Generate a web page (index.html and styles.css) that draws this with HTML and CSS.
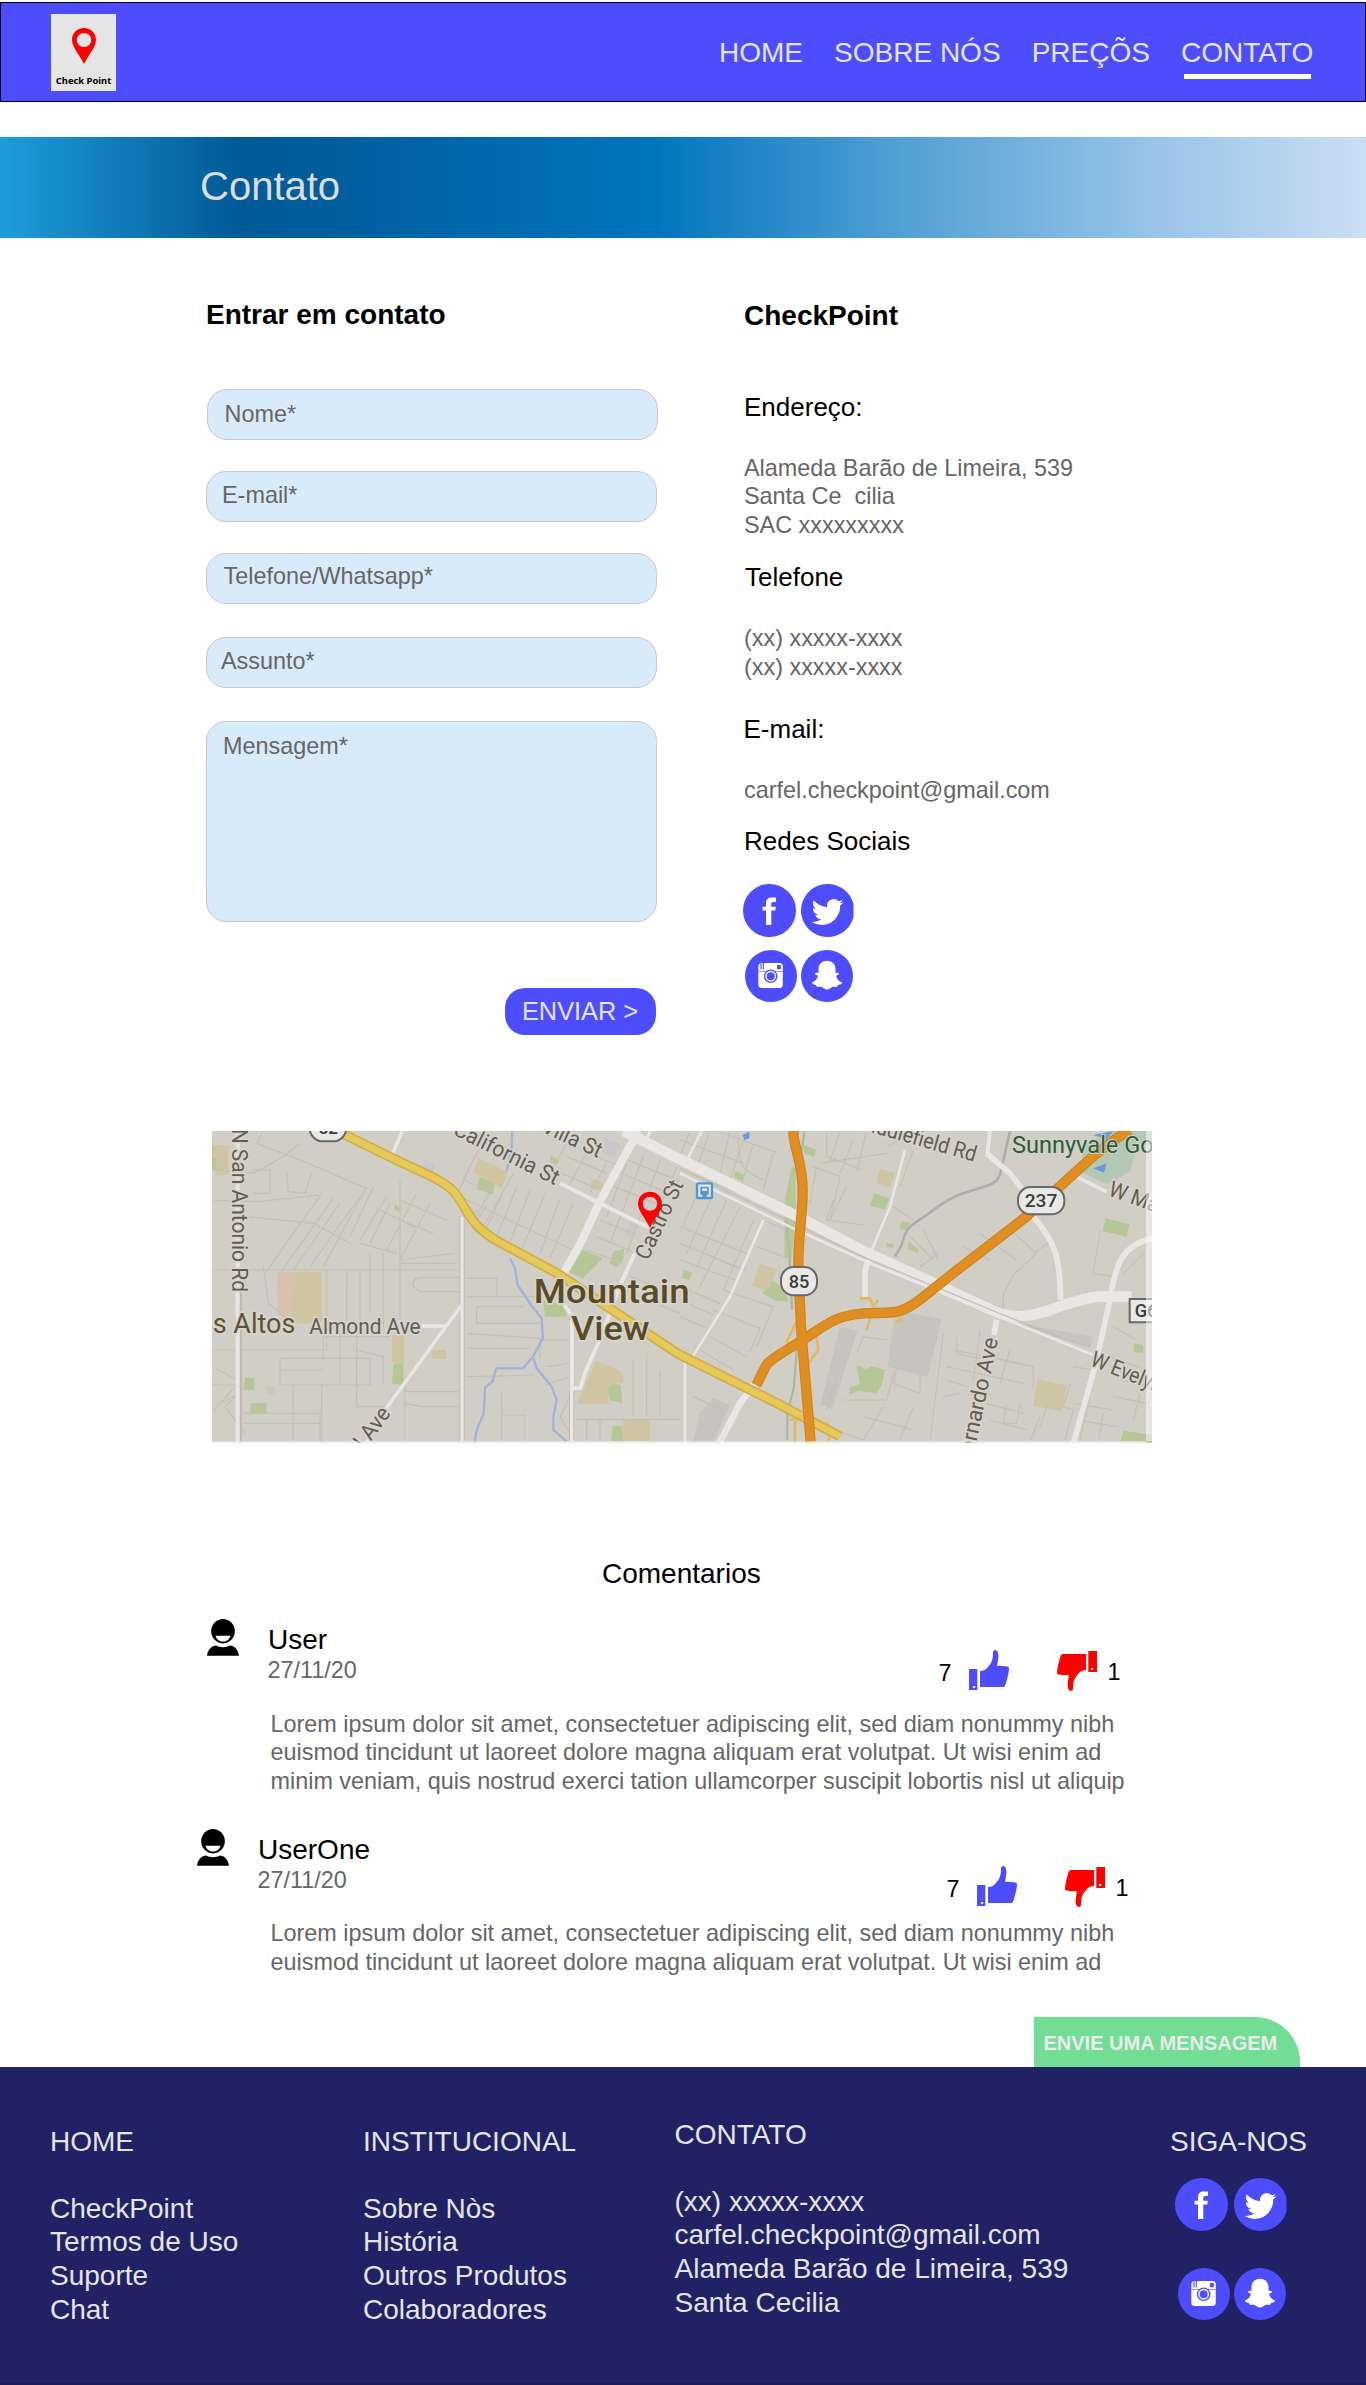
FILE: index.html
```html
<!DOCTYPE html>
<html lang="pt-BR">
<head>
<meta charset="utf-8">
<title>CheckPoint - Contato</title>
<link rel="stylesheet" href="styles.css">
</head>
<body>
<svg class="sprite" aria-hidden="true">
  <symbol id="pin" viewBox="0 0 24 36" preserveAspectRatio="none">
    <path fill="#f00" fill-rule="evenodd" d="M12 0C5 0 0 5 0 12c0 7 7 14 12 24 5-10 12-17 12-24C24 5 19 0 12 0zm0 5c4 0 7.200 3 7.200 7s-3.200 7-7.200 7-7.200-3-7.200-7 3.200-7 7.200-7z"/>
  </symbol>
  <symbol id="facebook" viewBox="0 0 53 53">
    <circle cx="26.500" cy="26.500" r="26.500" fill="#4d4dff"/>
    <path fill="#fff" d="M23 41V26.500h-3.500v-3.800H23v-3.400c0-4 2-5.800 5.500-5.800H33v4.600h-2.500c-1.700 0-2.200.7-2.200 2v2.600h4.500l-.5 3.800h-4V41z"/>
  </symbol>
  <symbol id="twitter" viewBox="0 0 53 53">
    <path fill="#4d4dff" d="M52.500 20v13C49.500 45 39 53 26.500 53 12 53 0 41 0 26.500S12 0 26.500 0C39 0 49.500 8 52.500 20z"/>
    <path fill="#fff" transform="translate(10.700 12.200) scale(1.320)" d="M23.950 4.570a10 10 0 0 1-2.820.77 4.960 4.960 0 0 0 2.160-2.720c-.95.55-2 .95-3.130 1.180a4.920 4.920 0 0 0-8.380 4.480C7.690 8.090 4.070 6.130 1.640 3.160a4.920 4.920 0 0 0 1.520 6.570 4.900 4.900 0 0 1-2.230-.61v.06a4.920 4.920 0 0 0 3.950 4.830 5 5 0 0 1-2.210.08 4.940 4.940 0 0 0 4.600 3.420A9.870 9.870 0 0 1 0 19.540a14 14 0 0 0 7.550 2.210c9.050 0 14-7.500 14-13.980 0-.21 0-.42-.02-.63a9.940 9.940 0 0 0 2.460-2.550z"/>
  </symbol>
  <symbol id="instagram" viewBox="0 0 52 52">
    <circle cx="26" cy="26" r="26" fill="#4d4dff"/>
    <rect x="13.300" y="13" width="24.500" height="25" rx="3.500" fill="#fff"/>
    <path stroke="#4d4dff" stroke-width="1.100" d="M16 13.500v6M18.300 13v6.500"/>
    <path stroke="#8f8fff" stroke-width="1" d="M13.300 21.500h24.500"/>
    <rect x="32" y="15" width="3.800" height="4.200" rx=".6" fill="#4d4dff"/>
    <circle cx="25.700" cy="26.200" r="6.800" fill="#4d4dff"/>
    <circle cx="25.700" cy="26.200" r="4.700" fill="#4d4dff" stroke="#fff" stroke-width="1.500"/>
  </symbol>
  <symbol id="snapchat" viewBox="0 0 52 52">
    <circle cx="26" cy="26" r="26" fill="#4d4dff"/>
    <path fill="#fff" d="M26 10.700c5.500 0 8.500 4 8.500 8.500V23c1.500-.4 3-.5 3.400.4.300 1-1.400 1.700-2.900 2.400 1 4 3.300 5.700 6 6.700.2 1.800-2 2-4 2.500-.6 1-.5 2-2 2-3.500-.5-4 0-6 1.600-1.500 1.200-4.500 1.200-6 0-2-1.600-2.500-2.100-6-1.600-1.500 0-1.400-1-2-2-2-.5-4.200-.7-4-2.500 2.700-1 5-2.700 6-6.700-1.500-.7-3.200-1.400-2.900-2.400.4-.9 1.900-.8 3.400-.4v-3.800c0-4.500 3-8.500 8.500-8.500z"/>
  </symbol>
  <symbol id="person" viewBox="0 0 32 37">
    <ellipse cx="16" cy="12.200" rx="11.800" ry="12.200"/>
    <path fill="#fff" d="M8.500 16.700h15c-1 3.600-4 5.800-7.500 5.800s-6.500-2.200-7.500-5.800z"/>
    <path d="M0 36.700c1-6.700 5-10 9-10.200 4 2.200 10 2.200 14 0 4 .2 8 3.500 9 10.200z"/>
  </symbol>
  <symbol id="like" viewBox="0 0 40 40">
    <path fill="#4d4dff" d="M0 19h8.300v21H0z"/><path fill="#fff" d="M4 36h2.200v2H4z"/>
    <path fill="#4d4dff" d="M11 21c3.500 0 5-1 8-4 4-4.500 5-8 5-14 0-2 .5-3 2.500-3C30 1 30 6 28 15.800c4 .2 8 0 11.300 1C41 18 39 26 37.500 31c-1 4-1.500 6-4 6H11z"/>
  </symbol>
  <symbol id="dislike" viewBox="0 0 40 40">
    <path fill="#f00" d="M31.300 0H40v21h-8.700z"/><path fill="#fff" d="M34 17h2.200v2H34z"/>
    <path fill="#f00" transform="rotate(180 20 20)" d="M11 21c3.500 0 5-1 8-4 4-4.500 5-8 5-14 0-2 .5-3 2.500-3C30 1 30 6 28 15.800c4 .2 8 0 11.300 1C41 18 39 26 37.500 31c-1 4-1.500 6-4 6H11z"/>
  </symbol>
</svg>

<header class="topbar">
  <div class="logo">
    <svg class="logo-pin"><use href="#pin"/></svg>
    <span class="logo-name">Check Point</span>
  </div>
  <nav class="menu">
    <a>HOME</a>
    <a>SOBRE NÓS</a>
    <a>PREÇÕS</a>
    <a class="current">CONTATO</a>
  </nav>
</header>

<div class="banner"><h1>Contato</h1></div>

<main>
  <section class="contact">
    <form class="form">
      <h2>Entrar em contato</h2>
      <div class="field name">Nome*</div>
      <div class="field email">E-mail*</div>
      <div class="field phone">Telefone/Whatsapp*</div>
      <div class="field subject">Assunto*</div>
      <div class="field message">Mensagem*</div>
      <div class="send">ENVIAR &gt;</div>
    </form>
    <div class="info">
      <h2>CheckPoint</h2>
      <h3 class="t-address">Endereço:</h3>
      <p>Alameda Barão de Limeira, 539
Santa Ce  cilia
SAC xxxxxxxxx</p>
      <h3 class="t-phone">Telefone</h3>
      <p class="phones">(xx) xxxxx-xxxx
(xx) xxxxx-xxxx</p>
      <h3 class="t-email">E-mail:</h3>
      <p class="mail">carfel.checkpoint@gmail.com</p>
      <h3 class="t-social">Redes Sociais</h3>
      <div class="social">
        <svg class="big"><use href="#facebook"/></svg>
        <svg class="big"><use href="#twitter"/></svg>
      </div>
      <div class="social second">
        <svg class="small"><use href="#instagram"/></svg>
        <svg class="small"><use href="#snapchat"/></svg>
      </div>
    </div>
  </section>

  <svg class="map" viewBox="36 33 2820 936" preserveAspectRatio="none">
    <rect x="36" y="33" width="2820" height="936" fill="#d1cec6"/>
    <!-- parks, schools and blocks -->
    <g fill="#b5c797">
      <path d="M36 112h14v40H36zM135 773h27v38h-30zM152 850h48v28h-48zM580 732l30-4v65h-34zM838 170l48 15-8 38-48-15zM1148 390l60 25-60 60-40-18zM1240 395l32-8-2 30-20 25-22-12zM1030 540l80 20-15 30h-60zM1230 790l32 5 5 55-38-10-7-30zM1238 918h30v46h-35zM585 255l18 5-3 15-18-5zM1052 108l25 10-5 15-22-6z"/>
    </g>
    <g fill="#d0c5a3">
      <path d="M36 75h50v90H50v-50H36zM260 457h105v150l-100 5zM576 645h38v83h-38zM694 690h44v27h-40zM835 115l88 40-18 50-85-48zM1190 720l80 38v30l-45 8v55h-95zM1270 898h80v66h-80zM1178 178l32 8-6 28-35-12z"/>
    </g>
    <path fill="#d8c2ae" d="M232 457h55v45l-15 40v65l-38-25z"/>
    <g fill="#c9c8c9"><path d="M670 118l38 14-12 28-32-12zM805 265l40 6-10 30-22-8zM200 800h25v24h-25zM1215 55l50 20-20 38-40-15zM1290 300l25 8-14 50-25-9z"/></g>
    <g transform="translate(1440 0)">
      <path fill="#b5c797" d="M372 75l36 15-5 20-32-10zM335 140l12 5v150l-12 120h-22V250zM165 152l28 12-4 18-28-10zM582 220l46 15-15 34-42-12zM665 304l25 5-5 24-27-6zM685 364l32 26-5 8-28-10zM275 480l30 20 22 45-40-3-40-22zM12 450l25 8-9 22-22-7zM530 736l30 12 15-10 40 12-10 45-15 25-55-8-28 14 4-24 28-10zM1278 295l70 17-8 38-72-17zM1330 932l86 12v22h-95zM1362 670l28 5v24l-30-4zM620 368l20 4v12l-20-4z"/>
      <path fill="#d0c5a3" d="M600 147l45 12-15 45-40-15zM240 432l50 14-18 50-15 15-42-12zM1072 778l88 18-15 78-85-16z"/>
      <path fill="#b3c8b3" d="M1205 80l80-47h131v42h-45l-20 78-70 40-70-35z"/>
      <path fill="#c5c4be" d="M645 570l140 28-42 172-120-30zM480 620l52 12-75 235-35-12zM100 835l50 20-50 111H40l20-90zM990 605l250 45-10 35z"/>
    </g>
    <!-- residential streets -->
    <g fill="none" stroke="#c3c0b6" stroke-width="3.600">
      <path d="M190 33L170 70 300 120 500 205M300 70L250 110 160 160 36 150M160 150h50v70h-50M260 155l5 60 50 5 20-60M36 240l140 5 180-20M140 290l200 20 110 60M195 460l170-240M240 460l160-225M280 450l140-200M330 440l150-210M370 440L500 200M36 450h740M380 450v240M440 450v150M480 450v160M510 400v180M550 400v220M600 180v420M190 440l15 110 60 50M36 690h340M240 715h270M240 715v80h270v-80M240 750h130M370 620v100M280 790v175M36 795h100M36 740l95 50M135 800l-60 60 60 80M36 875l80-85M60 850l60-30M130 880h230v85M130 910h230M365 790v175M420 640v150M470 690l80 20v80M470 640v150M370 650h200M470 660v200h90M615 790v175M615 815h160M615 850l50 10h110M640 500c-5-25 10-28 40-28h100M640 500l20 15h120M480 370l110 30M480 360L560 230M510 370l60-120M560 390l90-170M600 420l90-170M450 350l70-150M530 265l120 60M600 240l140 60M600 300l100 40M600 420l160-20M600 430h170M800 475h90v50M800 530h230M830 560v50h150M830 560h140M830 610h190M800 640l220 15v60M800 685h190M800 770l200-5M1030 660h80M1040 740l70-10M1110 770l-75 25M905 815v150M905 885h70v80M1110 830l-30 60 30 50M1130 898h310M1160 898v68M1200 898v68M1300 720v170M1340 700v190M1380 750v140"/>
      <path d="M800 170l-35 60M850 60l-60 120 80 35-30 55M780 230l230 110 110 50M860 255l-40 70M905 225l-50 110M950 200l-60 150M990 210l-65 170M1035 220l-70 170M1080 235l-60 165M1120 250l-70 165M850 320l90-160M1110 50l-60 110M1160 100l-55 100M1220 130l-50 90M1060 150l130 55M1100 110l120 50M1140 90l110 45M1220 190l180 75M1240 150l190 80M1260 110l180 75M1280 130l-60 160M1330 110l-100 260M1380 120l-100 280M1430 140l-55 130M1200 300l110 45M1190 350l120 50M1160 390l110 40M1290 470l150 60M1270 510l170 70"/>
      <g transform="translate(1440 0)">
        <path d="M30 33L0 110M90 33L55 130M150 33L120 160M190 60L150 180M0 60l190 70M30 160l150 60M110 33l180 65M220 70l-40 140M280 100l-30 110M0 320l200 80M0 370l180 75M0 420l165 60M0 500l120 50M0 540l100 45M0 590l80 35M60 200L0 340M100 220L20 400M140 240L50 440M180 260L60 500M220 300l-90 210M250 300l70 30M230 380l80 30M130 510l150 50-50 120M100 570l140 55-30 70M90 650l110 60M60 690l100 60M40 830l100 45"/>
        <path d="M440 40v70l110 40M480 33l-30 90M520 60l-40 100M400 140l80 30-30 130M460 240l-20 60 110 15M620 80l80-40M700 90l-40 110M640 260l60 40M690 350l70 70M730 330l45 90M720 440l55-40M850 380l80 40M900 340l110 80M980 320l90 80-70 65-30 60v50M1060 400l60-40M1260 330l-20 130 60 10M1390 400l-60 60M420 130l200-30M500 200l-50 100"/>
        <path d="M530 700l20-50 70 10M490 840h130l20-80M470 780l-30 90M650 740l-10 50 80 30v-60M790 640l-40 325M830 650v50l80 20M800 740l230 50M820 690l200 40M900 630l-20 150M960 720l100 20v60M990 690l-30 100M800 780l60 20M840 820l-50 10M920 850l110 30M930 900l110 30M980 850l-10 60h40l10-60M1080 890l-30 75M1110 830l-30 90M1170 790l-20 70 30 10-25 90M1180 740l60 10M1180 850l120 20M1190 900l120 20M1230 820l-30 140M1270 880l-15 85M1260 700l140 50M1300 620l70 40M1320 780l90 20M1300 830l100 20M1380 820l-20 80M550 890l150 40M460 930l90 30M610 860l-60 100M700 860l-40 100"/>
        <path d="M170 50c20 50-20 90 80 130M410 140l-20 110M560 33l-30 120"/>
      </g>
    </g>
    <!-- creeks -->
    <g fill="none" stroke="#9fb3dc" stroke-width="7">
      <path d="M937 33l-2 50-15 70M930 415l15 30 8 50 40 60 32 40 4 60-30 55-30 35h-80l-12 40-22 18-4 80-20 45-8 40M1000 715l10 30 45 55 15 40-10 50v40l40 35"/>
      <path stroke="#a9b9a4" d="M1813 33l-8 60M1758 300l10 100 8 170M1790 690l-8 110-20 80v80"/>
    </g>
    <path fill="none" stroke="#aeaead" stroke-width="8" stroke-linejoin="round" d="M2430 33l-25 110c-5 30-15 45-45 55l-70 22c-50 15-80 45-125 75-45 28-50 40-60 80l-20 35"/>
    <!-- secondary roads -->
    <g fill="none" stroke="#c0b9ae" stroke-width="16"><path d="M786 290V966M118 500V966M1115 590v370"/></g>
    <g fill="none" stroke="#e8e7e4" stroke-linejoin="round">
      <path stroke-width="12" d="M113 33V966M1080 190l120 60 150 75M1115 600v215M1090 550l26 40v215h25l15-50 50-110 50-140 60-130"/>
      <path stroke-width="10" d="M786 290V966M785 555L555 870 500 966M660 618h80M575 108l32-75M1115 800v166"/>
      <path stroke-width="24" d="M1315 33l-115 210-55 120-65 115"/>
      <path stroke-width="32" d="M1270 33l170 85 340 165 220 115 220 100 155 72c60 28 110 20 160 5 50-18 110-40 160-45h100"/>
      <path stroke-width="8" d="M1440 160l340 165 220 100 410 170 270 110M1350 33l-12 30M1505 33l-40 80M1690 300l-100 230-115 185M2115 90l-45 170-55 130M1455 720v246"/>
      <path stroke-width="17" d="M2015 390l-20 60v80M2360 100l70 60 35 45M2500 290c70 80 80 130 82 250M2856 355c-90 20-110 80-125 180l-45 200-65 232M2390 600l-8 45"/>
      <path stroke-width="12" d="M2370 33l-8 70M2630 170l90 45"/>
      <path stroke-width="20" d="M1665 790l-45 60-60 116"/>
    </g>
    <path fill="none" stroke="#c3beb4" stroke-width="4" d="M1440 145l340 165 220 105 410 170 220 85"/>
    <!-- ramps -->
    <g fill="none" stroke="#e2b867" stroke-width="8"><path d="M1980 535h30l10 25 15-20M2000 630l10-35M2085 610l20-15M1790 605l-30 60 35 25M1850 650l5 40-30 40M1785 965v-60c20-30 60-25 70 10 40-20 40 20 30 50M1770 900l60-15"/></g>
    <!-- main highways -->
    <g fill="none" stroke-linejoin="round">
      <path stroke="#cdae4d" stroke-width="30" d="M430 42l145 71 110 52c105 50 85 75 140 145 40 45 90 65 130 87l120 65 360 240 95 47 200 100 190 100"/>
      <path stroke="#e6c857" stroke-width="20" d="M430 42l145 71 110 52c105 50 85 75 140 145 40 45 90 65 130 87l120 65 360 240 95 47 200 100 190 100"/>
      <path stroke="#cc861f" stroke-width="31" d="M1780 33c0 50 28 90 28 180 0 80-14 130-13 230l8 180 29 343M1669 795l30-60c20-25 70-48 100-70 70-42 100-78 190-85 80-4 110 10 180-48l90-72 220-170 100-90c70-65 140-130 210-170"/>
      <path stroke="#e08e22" stroke-width="24" d="M1780 33c0 50 28 90 28 180 0 80-14 130-13 230l8 180 29 343M1669 795l30-60c20-25 70-48 100-70 70-42 100-78 190-85 80-4 110 10 180-48l90-72 220-170 100-90c70-65 140-130 210-170"/>
    </g>
    <path fill="#6d98e0" d="M2680 145l40-15-8 28zM2680 45l60-12-20 25zM1628 45l20-10v20l-15 6z"/>
    <!-- route shields -->
    <g fill="#e8e8e6" stroke="#66686a" stroke-width="6">
      <rect x="329" y="-18" width="110" height="82" rx="40"/>
      <rect x="2454" y="201" width="139" height="82" rx="38"/>
      <rect x="1743" y="441" width="108" height="85" rx="38"/>
      <path d="M2789 537h80v70h-80z"/>
    </g>
    <rect x="1491" y="190" width="45" height="44" rx="4" fill="#e8e8e6" stroke="#4d97d8" stroke-width="7"/>
    <path fill="#4d97d8" d="M1501 200h25v24h-6v8h-13v-8h-6z"/>
    <path fill="#e8e8e6" d="M1506 205h15v8h-15z"/>
    <!-- labels -->
    <g class="map-num">
      <text x="2474" y="262" textLength="98" lengthAdjust="spacingAndGlyphs">237</text>
      <text x="1766" y="503" textLength="62" lengthAdjust="spacingAndGlyphs">85</text>
      <text x="356" y="42" textLength="58" lengthAdjust="spacingAndGlyphs">82</text>
      <text x="2804" y="591" textLength="68" lengthAdjust="spacingAndGlyphs">G6</text>
    </g>
    <g class="map-label">
      <text transform="translate(95 26) rotate(90)" textLength="490" lengthAdjust="spacingAndGlyphs">N San Antonio Rd</text>
      <text transform="translate(756 42) rotate(26.500)" textLength="345" lengthAdjust="spacingAndGlyphs">California St</text>
      <text transform="translate(1022 34) rotate(25)" textLength="190" lengthAdjust="spacingAndGlyphs">Villa St</text>
      <text transform="translate(1344 424) rotate(-65)" textLength="255" lengthAdjust="spacingAndGlyphs">Castro St</text>
      <text x="328" y="642" textLength="334" lengthAdjust="spacingAndGlyphs">Almond Ave</text>
      <text transform="translate(494 990) rotate(-54)" textLength="136" lengthAdjust="spacingAndGlyphs">l Ave</text>
      <text transform="translate(1962 22) rotate(16)" textLength="375" lengthAdjust="spacingAndGlyphs">Middlefield Rd</text>
      <text transform="translate(2722 225) rotate(20)" textLength="190" lengthAdjust="spacingAndGlyphs">W Mau</text>
      <text transform="translate(2668 735) rotate(22)" textLength="225" lengthAdjust="spacingAndGlyphs">W Evelyn</text>
      <text transform="translate(2322 1000) rotate(-78)" textLength="350" lengthAdjust="spacingAndGlyphs">ernardo Ave</text>
    </g>
    <text class="map-town" x="38" y="640" textLength="248" lengthAdjust="spacingAndGlyphs">s Altos</text>
    <text class="map-park" x="2436" y="100" textLength="425" lengthAdjust="spacingAndGlyphs">Sunnyvale Go</text>
    <g class="map-city">
      <text x="1001" y="548" textLength="468" lengthAdjust="spacingAndGlyphs">Mountain</text>
      <text x="1113" y="660" textLength="236" lengthAdjust="spacingAndGlyphs">View</text>
    </g>
    <use href="#pin" x="1314" y="215" width="72" height="108"/>
    <path fill="#fff" fill-opacity=".5" d="M2838 33h18v930h-18zM36 963h2802v6H36z"/>
  </svg>

  <section class="comments">
    <h2>Comentarios</h2>
    <article class="comment first">
      <div class="comment-head">
        <svg class="avatar"><use href="#person"/></svg>
        <div class="who"><h4>User</h4><time>27/11/20</time></div>
        <div class="votes">
          <span>7</span><svg class="thumb"><use href="#like"/></svg>
          <svg class="thumb down"><use href="#dislike"/></svg><span class="against">1</span>
        </div>
      </div>
      <p>Lorem ipsum dolor sit amet, consectetuer adipiscing elit, sed diam nonummy nibh
euismod tincidunt ut laoreet dolore magna aliquam erat volutpat. Ut wisi enim ad
minim veniam, quis nostrud exerci tation ullamcorper suscipit lobortis nisl ut aliquip</p>
    </article>
    <article class="comment second">
      <div class="comment-head">
        <svg class="avatar"><use href="#person"/></svg>
        <div class="who"><h4>UserOne</h4><time>27/11/20</time></div>
        <div class="votes">
          <span>7</span><svg class="thumb"><use href="#like"/></svg>
          <svg class="thumb down"><use href="#dislike"/></svg><span class="against">1</span>
        </div>
      </div>
      <p>Lorem ipsum dolor sit amet, consectetuer adipiscing elit, sed diam nonummy nibh
euismod tincidunt ut laoreet dolore magna aliquam erat volutpat. Ut wisi enim ad</p>
    </article>
  </section>
  <div class="chat">ENVIE UMA MENSAGEM</div>
</main>

<footer class="footer">
  <div class="col home"><h5>HOME</h5><p>CheckPoint
Termos de Uso
Suporte
Chat</p></div>
  <div class="col about"><h5>INSTITUCIONAL</h5><p>Sobre Nòs
História
Outros Produtos
Colaboradores</p></div>
  <div class="col reach"><h5>CONTATO</h5><p>(xx) xxxxx-xxxx
carfel.checkpoint@gmail.com
Alameda Barão de Limeira, 539
Santa Cecilia</p></div>
  <div class="col follow"><h5>SIGA-NOS</h5>
    <div class="social">
      <svg class="big"><use href="#facebook"/></svg>
      <svg class="big"><use href="#twitter"/></svg>
    </div>
    <div class="social second">
      <svg class="small"><use href="#instagram"/></svg>
      <svg class="small"><use href="#snapchat"/></svg>
    </div>
  </div>
</footer>
</body>
</html>
```

FILE: styles.css
```css
* { box-sizing: border-box; margin: 0; padding: 0; }

body {
  width: 1366px;
  height: 2385px;
  padding-top: 2px;
  background: #fff;
  font-family: "Liberation Sans", Arial, sans-serif;
  overflow-x: hidden;
}

svg { display: block; flex: none; }
.sprite { position: absolute; width: 0; height: 0; }

/* header */
.topbar {
  display: flex;
  height: 100px;
  padding: 11px 0 0 50px;
  border: 1px solid #000;
  background: #4d4dff;
}
.logo {
  width: 65px;
  height: 77px;
  padding-top: 14px;
  background: #e5e5e5;
}
.logo-pin { width: 24px; height: 36px; margin: 0 auto; }
.logo-name {
  display: block;
  margin-top: 10px;
  text-align: center;
  font: bold 9.4px/14px "Noto Sans", "Open Sans", sans-serif;
  white-space: nowrap;
}
.menu {
  display: flex;
  gap: 31.1px;
  margin: 21.5px 0 0 603px;
  color: #e5e5e5;
  font-size: 28px;
  line-height: 33.6px;
  white-space: nowrap;
}
.current { position: relative; }
.current::after {
  content: "";
  position: absolute;
  left: 3px;
  top: 38.5px;
  width: 127px;
  height: 5px;
  background: #fff;
}

.banner {
  height: 101px;
  margin-top: 35px;
  padding: 25px 0 0 200px;
  background: linear-gradient(90deg, #1f9ddb 0%, #005a96 17.500%, #005f9f 25%, #0075bf 48%, #52a0d4 66%, #9ac5e8 85%, #cadef4 100%);
}
.banner h1 { color: #dcdcdc; font-size: 40px; font-weight: 400; line-height: 48px; }

/* contact */
.contact { display: flex; gap: 86px; height: 893px; padding: 60px 0 0 206px; }
.form { width: 452px; }
h2 { font-size: 28px; line-height: 34px; }
.field {
  width: 451px;
  height: 51px;
  padding: 10px 0 0 16.5px;
  border: 1px solid #c8c8c8;
  border-radius: 20px;
  background: #d8ebfb;
  color: #666;
  font-size: 23.4px;
  line-height: 29px;
  white-space: nowrap;
}
.name { margin: 57px 0 0 1px; }
.email { margin-top: 31px; padding: 9px 0 0 15px; }
.phone { margin-top: 31px; padding: 8px 0 0 16.5px; }
.subject { margin-top: 33px; padding: 9px 0 0 14px; }
.message { height: 201px; margin-top: 33px; padding-left: 16px; }
.send {
  width: 151px;
  height: 47px;
  margin: 66px 0 0 299px;
  padding: 8px 0 0 17px;
  border-radius: 20px;
  background: #4d4dff;
  color: #e5e5e5;
  font-size: 25.3px;
  line-height: 31px;
  white-space: nowrap;
}

.info { padding-top: 1px; }
.info h3 { font-size: 26px; font-weight: 400; line-height: 31px; }
.info p { margin-top: 31px; color: #666; font-size: 23.4px; line-height: 28.7px; white-space: pre; }
.info .t-address { margin-top: 58.5px; }
.info .t-phone { margin: 22px 0 0 1px; }
.info .phones { margin-top: 31.5px; }
.info .t-email { margin: 32px 0 0 -.5px; }
.info .t-social { margin-top: 21.5px; }
.social { display: flex; gap: 5px; }
.info .social { margin: 27.3px 0 0 -1px; }
.info .social.second { margin: 13px 0 0 .5px; gap: 4px; }
.big { width: 53px; height: 53px; }
.small { width: 52px; height: 52px; }

/* map */
.map { width: 940px; height: 312px; margin-left: 212px; }
.map text { font-family: Roboto, sans-serif; }
.map-label text {
  font-size: 66px;
  fill: #625c50;
  stroke: #d6d3cb;
  stroke-width: 10px;
  paint-order: stroke;
}
.map-num text { font-size: 56px; font-weight: 500; fill: #3c3c3c; }
.map .map-town { font-size: 84px; fill: #5f5230; stroke: #d6d3cb; stroke-width: 10px; paint-order: stroke; }
.map .map-park { font-size: 70px; fill: #2f5a3a; stroke: #cdd5c6; stroke-width: 6px; paint-order: stroke; }
.map-city text { font-size: 98px; font-weight: 500; fill: #594b27; stroke: #d6d3cb; stroke-width: 10px; paint-order: stroke; }

/* comments */
.comments { height: 574px; padding-top: 113.5px; }
.comments h2 { padding-left: 602px; font-weight: 400; }
.comment-head { display: flex; align-items: flex-start; }
.comment.first { margin-top: 28.5px; padding-left: 207px; }
.comment.second { margin-top: 33.5px; padding-left: 197px; }
.avatar { width: 32px; height: 37px; }
.who { width: 200px; margin: 4px 0 0 28.5px; }
.who h4 { padding-left: .5px; font-size: 28px; font-weight: 400; line-height: 33px; }
.who time { display: block; color: #666; font-size: 23.4px; line-height: 28px; }
.votes { display: flex; align-items: flex-start; margin: 31px 0 0 471px; font-size: 23.4px; line-height: 29px; }
.votes span { width: 30px; margin-top: 9px; }
.second .votes { margin: 37px 0 0 489px; }
.thumb { width: 40px; height: 40px; }
.thumb.down { margin: 1px 0 0 48px; }
.votes .against { margin: 8px 0 0 11px; }
.comment p { height: 86px; color: #666; font-size: 23.4px; line-height: 28.7px; white-space: pre; }
.first p { margin: 18.5px 0 0 63.5px; }
.second p { margin: 12px 0 0 73.5px; }

.chat {
  width: 266px;
  height: 50px;
  margin-left: 1034px;
  padding: 14px 0 0 9.5px;
  border-top-right-radius: 45px;
  background: #72dd95;
  color: #ececec;
  font-size: 20px;
  font-weight: 700;
  line-height: 24px;
  white-space: nowrap;
}

/* footer */
.footer {
  display: flex;
  height: 318px;
  padding: 57.500px 0 0 49px;
  border-bottom: 2px solid #1c1c58;
  background: #212165;
  color: #e5e5e5;
  font-size: 28px;
}
.col h5 { font-size: 28px; font-weight: 400; line-height: 33.6px; }
.col p { margin-top: 33.6px; line-height: 33.8px; white-space: pre; }
.home { width: 314px; padding-left: 1px; }
.about { width: 311.5px; }
.reach { width: 495.5px; margin-top: -7px; }
.footer .social { margin: 20px 0 0 5px; gap: 5.5px; }
.footer .second { margin: 37px 0 0 7.5px; gap: 4.5px; }
```
